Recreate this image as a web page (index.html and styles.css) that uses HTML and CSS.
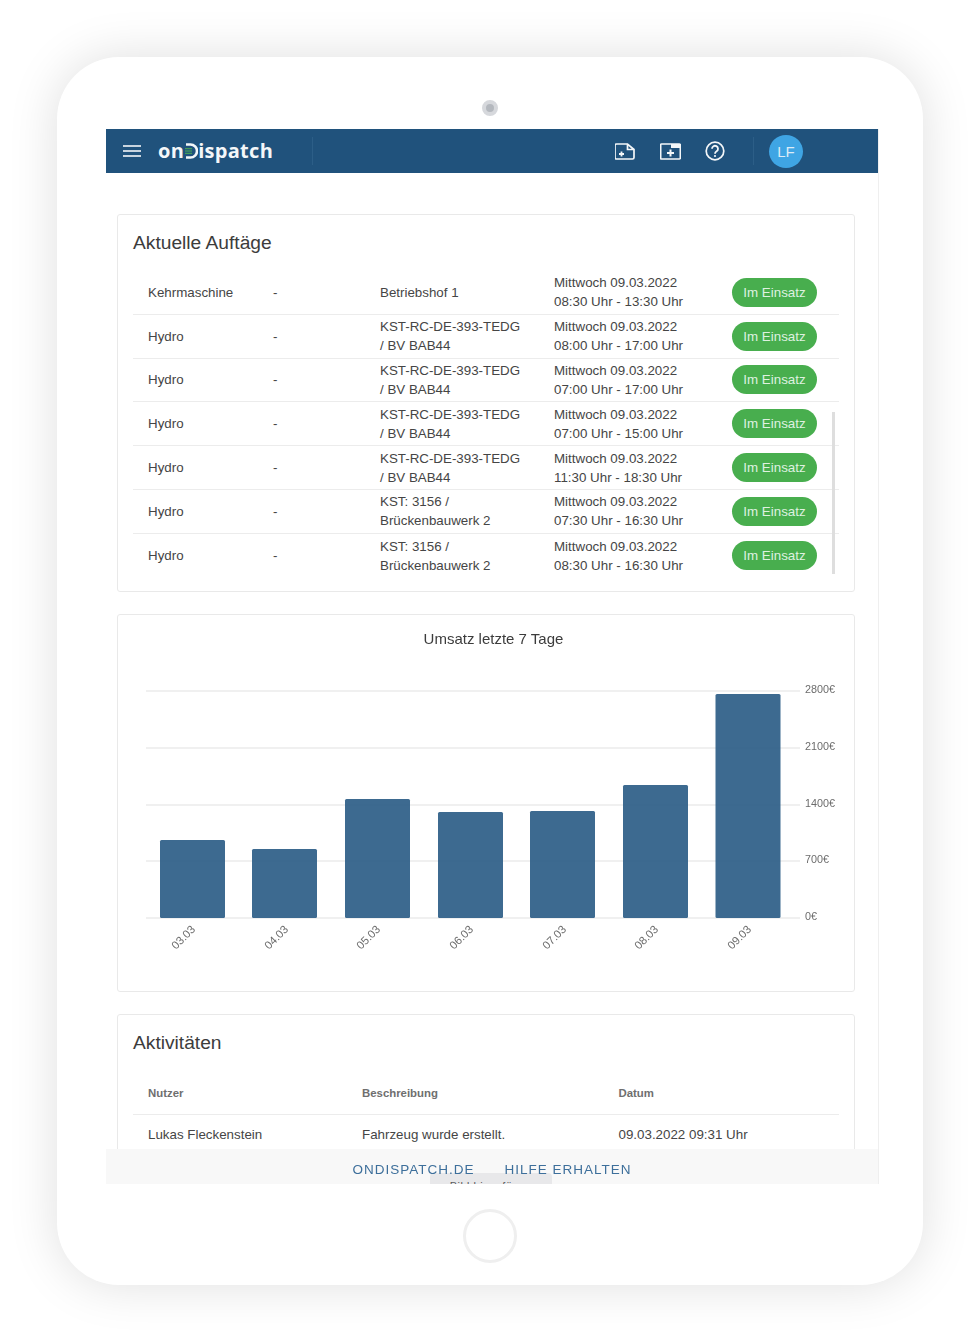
FILE: index.html
```html
<!DOCTYPE html>
<html>

<head>
    <title>onDispatch Dashboard</title>
    <link rel="stylesheet" href="styles.css">
</head>

<body>
    <div class="tablet">
        <div class="camera"></div>
        <div class="screen">
            <header class="topbar">
                <svg class="menu-icon" viewBox="0 0 18 12" width="18" height="12">
                    <path d="M0 1h18M0 6h18M0 11h18" stroke="#fff" stroke-width="1.700" fill="none" />
                </svg>
                <div class="logo">on<svg class="logo-d" viewBox="0 0 13 16" width="13" height="16">
                        <path d="M1 1.500h4.500a6.500 6.500 0 0 1 0 13H1" stroke="#f4f7f9" stroke-width="2.600" fill="none" />
                        <path d="M0 5.700h7M0 8h7M0 10.300h7" stroke="#4caf50" stroke-width="1" fill="none" />
                    </svg>ispatch</div>
                <div class="divider logo-divider"></div>
                <div class="actions">
                    <svg viewBox="0 0 20 17" width="20" height="17">
                        <path d="M2 1h10.500l6.500 5.500v8a1.500 1.500 0 0 1-1.500 1.500h-16a1.500 1.500 0 0 1-1.500-1.500v-12a1.500 1.500 0 0 1 1.500-1.500zM12.500 1v5.500h6.500" stroke="#f4f7f9" stroke-width="1.700" fill="none" />
                        <path d="M6.500 8.500v5M4 11h5" stroke="#f4f7f9" stroke-width="1.800" fill="none" />
                    </svg>
                    <svg viewBox="0 0 21 17" width="21" height="17">
                        <path d="M1.500 1h18a.8.8 0 0 1 .8.8v13.400a.8.8 0 0 1-.8.8h-18a.8.8 0 0 1-.8-.8v-13.400a.8.8 0 0 1 .8-.8z" stroke="#f4f7f9" stroke-width="1.600" fill="none" />
                        <path d="M11 1h9.500v4h-9.500z" fill="#f4f7f9" />
                        <path d="M10.500 6.500v7M7 10h7" stroke="#f4f7f9" stroke-width="2" fill="none" />
                    </svg>
                    <svg class="help-icon" viewBox="0 0 20 20" width="20" height="20">
                        <circle cx="10" cy="10" r="8.800" stroke="#f4f7f9" stroke-width="1.700" fill="none" />
                        <path d="M7 7.800a3 3 0 1 1 4.600 2.500c-1.100.7-1.600 1.200-1.600 2.400" stroke="#f4f7f9" stroke-width="1.800" fill="none" />
                        <circle cx="10" cy="15" r="1.100" fill="#f4f7f9" />
                    </svg>
                </div>
                <div class="divider user-divider"></div>
                <div class="avatar">LF</div>
            </header>

            <main class="content">
                <section class="card orders">
                    <h2 class="card-title">Aktuelle Auftäge</h2>
                    <div class="order-row">
                        <span>Kehrmaschine</span><span>-</span><span>Betriebshof 1</span>
                        <span>Mittwoch 09.03.2022<br>08:30 Uhr - 13:30 Uhr</span><span class="badge">Im Einsatz</span>
                    </div>
                    <div class="order-row">
                        <span>Hydro</span><span>-</span><span>KST-RC-DE-393-TEDG<br>/ BV BAB44</span>
                        <span>Mittwoch 09.03.2022<br>08:00 Uhr - 17:00 Uhr</span><span class="badge">Im Einsatz</span>
                    </div>
                    <div class="order-row">
                        <span>Hydro</span><span>-</span><span>KST-RC-DE-393-TEDG<br>/ BV BAB44</span>
                        <span>Mittwoch 09.03.2022<br>07:00 Uhr - 17:00 Uhr</span><span class="badge">Im Einsatz</span>
                    </div>
                    <div class="order-row">
                        <span>Hydro</span><span>-</span><span>KST-RC-DE-393-TEDG<br>/ BV BAB44</span>
                        <span>Mittwoch 09.03.2022<br>07:00 Uhr - 15:00 Uhr</span><span class="badge">Im Einsatz</span>
                    </div>
                    <div class="order-row">
                        <span>Hydro</span><span>-</span><span>KST-RC-DE-393-TEDG<br>/ BV BAB44</span>
                        <span>Mittwoch 09.03.2022<br>11:30 Uhr - 18:30 Uhr</span><span class="badge">Im Einsatz</span>
                    </div>
                    <div class="order-row">
                        <span>Hydro</span><span>-</span><span>KST: 3156 /<br>Brückenbauwerk 2</span>
                        <span>Mittwoch 09.03.2022<br>07:30 Uhr - 16:30 Uhr</span><span class="badge">Im Einsatz</span>
                    </div>
                    <div class="order-row last-row">
                        <span>Hydro</span><span>-</span><span>KST: 3156 /<br>Brückenbauwerk 2</span>
                        <span>Mittwoch 09.03.2022<br>08:30 Uhr - 16:30 Uhr</span><span class="badge">Im Einsatz</span>
                    </div>
                    <div class="scrollbar"></div>
                </section>

                <section class="card chart-card">
                    <svg class="chart" viewBox="0 0 736 375" width="736" height="375">
                        <text class="chart-title" x="375.500" y="29">Umsatz letzte 7 Tage</text>
                        <g class="grid">
                            <path d="M28 76h654M28 133h654M28 190h654M28 246h654M28 303h654" />
                        </g>
                        <g class="bars">
                            <rect x="42" y="225" width="65" height="78" rx="1.500" />
                            <rect x="134" y="234" width="65" height="69" rx="1.500" />
                            <rect x="227" y="184" width="65" height="119" rx="1.500" />
                            <rect x="320" y="197" width="65" height="106" rx="1.500" />
                            <rect x="412" y="196" width="65" height="107" rx="1.500" />
                            <rect x="505" y="170" width="65" height="133" rx="1.500" />
                            <rect x="597.500" y="79" width="65" height="224" rx="1.500" />
                        </g>
                        <g class="y-labels">
                            <text x="687" y="78">2800€</text>
                            <text x="687" y="135">2100€</text>
                            <text x="687" y="192">1400€</text>
                            <text x="687" y="248">700€</text>
                            <text x="687" y="305">0€</text>
                        </g>
                        <g class="x-labels">
                            <text transform="translate(78 315) rotate(-45)">03.03</text>
                            <text transform="translate(171 315) rotate(-45)">04.03</text>
                            <text transform="translate(263 315) rotate(-45)">05.03</text>
                            <text transform="translate(356 315) rotate(-45)">06.03</text>
                            <text transform="translate(449 315) rotate(-45)">07.03</text>
                            <text transform="translate(541 315) rotate(-45)">08.03</text>
                            <text transform="translate(634 315) rotate(-45)">09.03</text>
                        </g>
                    </svg>
                </section>

                <section class="card activity">
                    <h2 class="card-title">Aktivitäten</h2>
                    <div class="activity-row activity-head">
                        <span>Nutzer</span><span>Beschreibung</span><span>Datum</span>
                    </div>
                    <div class="activity-row">
                        <span>Lukas Fleckenstein</span><span>Fahrzeug wurde erstellt.</span><span>09.03.2022 09:31 Uhr</span>
                    </div>
                </section>
            </main>

            <footer class="footer">
                <a>ONDISPATCH.DE</a>
                <a>HILFE ERHALTEN</a>
                <div class="image-hint">Bild hinzufügen</div>
            </footer>
        </div>
        <div class="home-button"></div>
    </div>
</body>

</html>
```

FILE: styles.css
```css
body {
    margin: 0;
    padding: 57px;
    height: 1342px;
    box-sizing: border-box;
    overflow: hidden;
    background: #fff;
    font-family: "Liberation Sans", Arial, sans-serif;
    color: #3f3f3f;
}

.tablet {
    position: relative;
    height: 1228px;
    box-sizing: border-box;
    padding: 72px 44px 0 49px;
    border-radius: 62px;
    background: #fff;
    box-shadow: 0 0 50px rgba(0, 0, 0, 0.13);
}

.camera {
    position: absolute;
    top: 43px;
    left: 425px;
    width: 8px;
    height: 8px;
    border: 4px solid #d6d8dc;
    border-radius: 50%;
    background: #b4b8be;
}

.home-button {
    position: absolute;
    top: 1152px;
    left: 406px;
    width: 48px;
    height: 48px;
    border: 3px solid #efefef;
    border-radius: 50%;
}

.screen {
    display: flex;
    flex-direction: column;
    height: 1055px;
    overflow: hidden;
    border-right: 1px solid #efefef;
    filter: blur(0.4px);
}

/* top bar */
.topbar {
    display: flex;
    flex: none;
    align-items: center;
    height: 44px;
    background: #20527c;
}

.menu-icon {
    margin-left: 17px;
}

.logo {
    display: flex;
    align-items: center;
    width: 154px;
    margin-left: 17px;
    padding-bottom: 2px;
    color: #f4f7f9;
    font-family: "Open Sans", sans-serif;
    font-size: 20px;
    font-weight: 700;
    letter-spacing: 0.300px;
}

.logo-d {
    margin: 1px 0 0 1px;
}

.divider {
    width: 1px;
    height: 28px;
    background: #2c5e87;
}

.actions {
    display: flex;
    align-items: center;
    gap: 25px;
    margin-left: 302px;
}

.help-icon {
    margin-left: -1px;
}

.user-divider {
    margin-left: 28px;
}

.avatar {
    display: flex;
    align-items: center;
    justify-content: center;
    width: 34px;
    height: 33px;
    margin-left: 15px;
    border-radius: 50%;
    background: #3fa5e4;
    color: #dcecf7;
    font-size: 15px;
}

/* cards */
.content {
    flex: 1;
    min-height: 0;
    overflow: hidden;
    padding: 41px 23px 0 11px;
}

.card {
    position: relative;
    box-sizing: border-box;
    margin-bottom: 22px;
    border: 1px solid #e9e9e9;
    border-radius: 3px;
    background: #fff;
}

.card-title {
    margin: 0;
    color: #3c3c3c;
    font-size: 19.200px;
    font-weight: 400;
    line-height: 22px;
}

/* orders */
.orders {
    height: 378px;
    padding: 17px 15px 0;
}

.orders .card-title {
    margin-bottom: 17px;
}

.order-row {
    display: grid;
    grid-template-columns: 125px 107px 174px 178px 85px;
    align-items: center;
    height: 43.800px;
    box-sizing: border-box;
    padding-left: 15px;
    border-bottom: 1px solid #ececec;
    color: #454545;
    font-size: 13.350px;
    line-height: 19px;
}

.last-row {
    border-bottom: none;
}

.badge {
    height: 29px;
    border-radius: 15px;
    background: #48ae4e;
    color: #dff1e0;
    line-height: 29px;
    text-align: center;
}

.scrollbar {
    position: absolute;
    top: 197px;
    right: 19px;
    width: 3px;
    height: 162px;
    background: #dedede;
}

/* chart */
.chart-card {
    height: 378px;
}

.chart {
    display: block;
}

.chart-title {
    fill: #3c3c3c;
    font-size: 15px;
    text-anchor: middle;
}

.grid path {
    stroke: #ececec;
    stroke-width: 1.300;
    fill: none;
}

.bars rect {
    fill: #2c5d87;
    fill-opacity: 0.92;
}

.y-labels text {
    fill: #6c6c6c;
    font-size: 10.800px;
}

.x-labels text {
    fill: #6c6c6c;
    font-size: 11.300px;
    text-anchor: end;
}

/* activity */
.activity {
    padding: 17px 15px 0;
}

.activity-row {
    display: grid;
    grid-template-columns: 214px 256.500px 1fr;
    align-items: center;
    height: 39px;
    padding-left: 15px;
    color: #454545;
    font-size: 13.350px;
}

.activity-head {
    height: 42px;
    margin-top: 18px;
    border-bottom: 1px solid #ececec;
    color: #6f6f6f;
    font-size: 11.400px;
    font-weight: 700;
}

/* footer */
.footer {
    position: relative;
    display: flex;
    flex: none;
    justify-content: center;
    gap: 30px;
    height: 35px;
    overflow: hidden;
    box-sizing: border-box;
    background: #f8f8f8;
    color: #3d6f9b;
    font-size: 13.500px;
    letter-spacing: 1px;
    line-height: 41px;
}

.footer a {
    position: relative;
    z-index: 1;
}

.image-hint {
    position: absolute;
    top: 24px;
    left: 324px;
    width: 122px;
    height: 30px;
    border-radius: 4px;
    background: #e8e8ea;
    color: #5a5a5a;
    font-size: 11px;
    letter-spacing: 0.500px;
    line-height: 26px;
    text-align: center;
}
```
